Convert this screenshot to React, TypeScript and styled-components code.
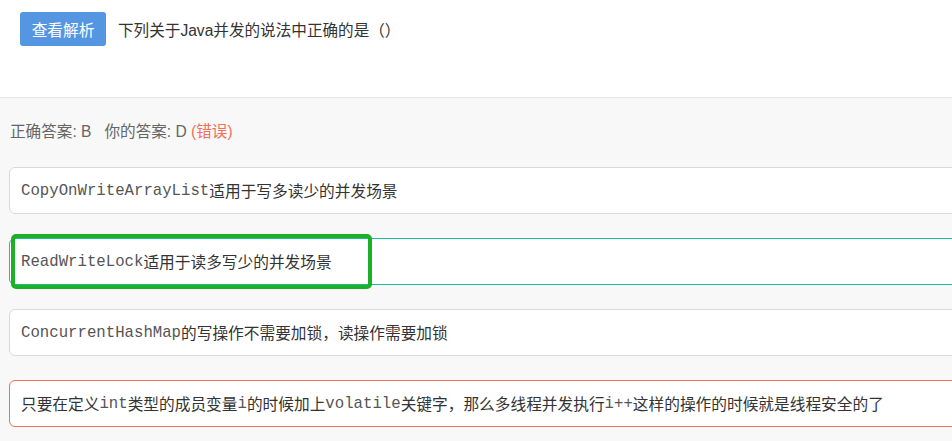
import { createGlobalStyle } from 'styled-components'
import styled from 'styled-components'

const GlobalStyle = createGlobalStyle`
  html, body {
    margin: 0;
    padding: 0;
    background: #ffffff;
    overflow: hidden;
  }
  body {
    font-family: 'Liberation Sans', 'Noto Sans CJK SC', sans-serif;
    color: #333;
  }
`

type OptionState = 'normal' | 'correct' | 'wrong'

type Option = {
  key: string
  state: OptionState
  parts: { text: string; code?: boolean }[]
  marked?: boolean
}

const OPTIONS: Option[] = [
  {
    key: 'A',
    state: 'normal',
    parts: [{ text: 'CopyOnWriteArrayList', code: true }, { text: '适用于写多读少的并发场景' }],
  },
  {
    key: 'B',
    state: 'correct',
    marked: true,
    parts: [{ text: 'ReadWriteLock', code: true }, { text: '适用于读多写少的并发场景' }],
  },
  {
    key: 'C',
    state: 'normal',
    parts: [{ text: 'ConcurrentHashMap', code: true }, { text: '的写操作不需要加锁，读操作需要加锁' }],
  },
  {
    key: 'D',
    state: 'wrong',
    parts: [
      { text: '只要在定义' },
      { text: 'int', code: true },
      { text: '类型的成员变量' },
      { text: 'i', code: true },
      { text: '的时候加上' },
      { text: 'volatile', code: true },
      { text: '关键字，那么多线程并发执行' },
      { text: 'i++', code: true },
      { text: '这样的操作的时候就是线程安全的了' },
    ],
  },
]

export default function App() {
  return (
    <Page>
      <GlobalStyle />
      <Header>
        <ExplainButton>查看解析</ExplainButton>
        <Question>下列关于Java并发的说法中正确的是（）</Question>
      </Header>
      <Result>
        <AnswerLine>
          正确答案: B&nbsp;&nbsp; 你的答案: D <Wrong>(错误)</Wrong>
        </AnswerLine>
        <OptionList>
          {OPTIONS.map((o) => (
            <OptionBox key={o.key} $state={o.state}>
              {o.parts.map((p, i) => (p.code ? <Code key={i}>{p.text}</Code> : <span key={i}>{p.text}</span>))}
              {o.marked && <Marker />}
            </OptionBox>
          ))}
        </OptionList>
      </Result>
    </Page>
  )
}

const Page = styled.div`
  width: 952px;
  height: 441px;
  overflow: hidden;
  display: flex;
  flex-direction: column;
`

const Header = styled.div`
  height: 97px;
  box-sizing: border-box;
  display: flex;
  align-items: flex-start;
  gap: 12px;
  padding: 12px 20px 0;
`

const ExplainButton = styled.button`
  width: 86px;
  height: 34px;
  border: 0;
  border-radius: 3px;
  background-color: #5596e3;
  color: #fff;
  font-family: 'Liberation Sans', 'Noto Sans CJK SC', sans-serif;
  font-size: 15.7px;
  padding: 0;
  cursor: pointer;
`

const Question = styled.div`
  height: 34px;
  display: flex;
  align-items: center;
  font-size: 15.6px;
  color: #333;
`

const Result = styled.div`
  flex: 1;
  border-top: 1px solid #e6e6e6;
  background-color: #f8f8f8;
  padding: 24px 0 0 9px;
`

const AnswerLine = styled.div`
  height: 20px;
  line-height: 20px;
  font-size: 15.6px;
  color: #666;
  padding-left: 1px;
`

const Wrong = styled.span`
  color: #f5705a;
`

const OptionList = styled.div`
  margin-top: 25px;
  display: flex;
  flex-direction: column;
  gap: 24px;
`

const borderFor = (s: OptionState) => (s === 'correct' ? '#1bbc9b' : s === 'wrong' ? '#f0705a' : '#d9d9d9')

const OptionBox = styled.div<{ $state: OptionState }>`
  position: relative;
  width: 1000px;
  height: 47px;
  box-sizing: border-box;
  display: flex;
  align-items: center;
  padding: 0 11px;
  border: 1px solid ${(p) => borderFor(p.$state)};
  border-radius: 6px;
  background-color: #fff;
  font-size: 15.7px;
  color: #333;
  white-space: nowrap;
`

const Code = styled.span`
  font-family: 'Liberation Mono', 'Courier New', monospace;
  font-size: 15.7px;
  color: #555;
`

const Marker = styled.div`
  position: absolute;
  left: 1px;
  top: -5px;
  width: 361px;
  height: 55px;
  box-sizing: border-box;
  border: 4px solid #1daf24;
  border-radius: 5px;
  pointer-events: none;
`
